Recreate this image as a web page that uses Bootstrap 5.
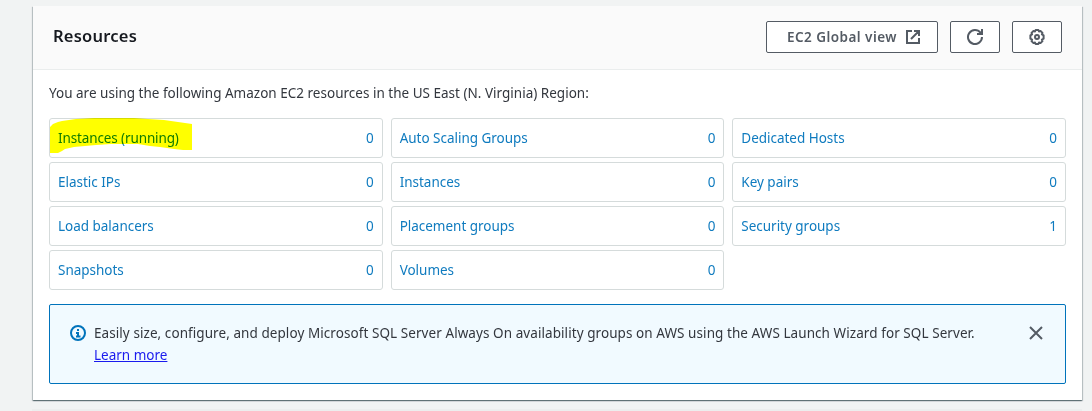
<!DOCTYPE html>
<html lang="en">
<head>
<meta charset="utf-8">
<meta name="viewport" content="width=device-width, initial-scale=1">
<title>EC2 Resources</title>
<link href="https://cdn.jsdelivr.net/npm/bootstrap@5.3.0/dist/css/bootstrap.min.css" rel="stylesheet">
<style>
body{background:#f1f3f3;font-family:"Noto Sans","Open Sans",sans-serif;font-size:13.5px;line-height:22px;color:#16191f;height:411px;overflow:hidden}
.page-pad{padding:6px 10px 0 33px}
.panel{border:0;border-radius:0;background:#fff;height:394px;box-shadow:0 1px 1px 0 rgba(0,28,36,.4),1px 1px 1px 0 rgba(0,28,36,.18),-1px 1px 1px 0 rgba(0,28,36,.18)}
.panel-head{height:64px;background:#fafafa;border-bottom:1px solid #eaeded;padding:0 20px 1px}
.panel-title{font-size:16.5px;font-weight:600;line-height:22px;letter-spacing:.22px;position:relative;top:-1px}
.panel-body{padding:12px 16px 0}
.intro{letter-spacing:.01px;margin-bottom:14px;color:#33373e}
.btn-aws{--bs-btn-color:#545b64;--bs-btn-border-color:#545b64;--bs-btn-bg:#fff;--bs-btn-hover-color:#16191f;--bs-btn-hover-border-color:#16191f;--bs-btn-border-radius:2px;--bs-btn-padding-x:0;--bs-btn-padding-y:0;--bs-btn-font-size:13.5px;--bs-btn-font-weight:600;height:32px;width:50px}
.btn-wide{width:172px;letter-spacing:.47px;padding-left:4px}
.actions{gap:12px}
.tiles{display:grid;grid-template-columns:repeat(3,1fr);gap:4px 8px}
.tile{position:relative;height:40px;border:1px solid #d5dbdb;border-radius:3px;padding:0 8px;color:#0f7bbf;text-decoration:none;letter-spacing:-.02px}
.tile-marked{letter-spacing:-.12px}
.marker{position:absolute;left:0;top:-1px;mix-blend-mode:multiply;pointer-events:none}
.notice{height:80px;margin:14px 0 0;border:1px solid #0073bb;border-radius:2px;background:#f1faff;padding:17px 21px 0 20px;color:#33373e}
.notice-text{letter-spacing:.07px;margin-left:8px}
.notice a{color:#1a1aee;letter-spacing:0}
.info-icon,.close-icon{margin-top:3px}
.next-panel{height:2px;margin:9px 10px 0 32px;background:#eceeee}
</style>
</head>
<body>
<main class="page-pad">
<section class="card panel">
<header class="panel-head d-flex align-items-center justify-content-between">
<h2 class="panel-title m-0">Resources</h2>
<div class="actions d-flex">
<button class="btn btn-aws btn-wide d-flex align-items-center justify-content-center" type="button"><span>EC2 Global view</span>
<svg class="ms-2" width="16" height="16" viewBox="0 0 16 16" fill="none" stroke="currentColor" stroke-width="2"><path d="M7 2H2v12h12V9M9 2h5v5M14 2 6 10"/></svg></button>
<button class="btn btn-aws d-flex align-items-center justify-content-center" type="button" aria-label="Refresh">
<svg width="16" height="16" viewBox="0 0 16 16" fill="none" stroke="currentColor" stroke-width="2"><path d="M10 5h5V0M15 8a7 7 0 1 1-1.500-4.300L14.700 5"/></svg></button>
<button class="btn btn-aws d-flex align-items-center justify-content-center" type="button" aria-label="Settings">
<svg width="16" height="16" viewBox="0 0 16 16" fill="none" stroke="currentColor" stroke-width="2" stroke-linejoin="round"><path d="M6.600 1h2.800l.6 1.500 1.500-.6 2 2-.6 1.500 1.700.9v3.400l-1.700.9.6 1.500-2 2-1.500-.6-.6 1.500H6.600L6 13.500l-1.500.6-2-2 .6-1.500L1.400 9.700V6.300l1.700-.9-.6-1.500 2-2 1.500.6z"/><circle cx="8" cy="8" r="2"/></svg></button>
</div>
</header>
<div class="panel-body">
<p class="intro">You are using the following Amazon EC2 resources in the US East (N. Virginia) Region:</p>
<div class="tiles">
<a href="#" class="tile tile-marked d-flex align-items-center justify-content-between"><span>Instances (running)</span><span>0</span>
<svg class="marker" width="144" height="38" viewBox="0 0 144 38"><path fill="#ff0" d="M0 9 3 6 8 4 12 3 26 1 44 0H84L98 1 114 2 128 4 142 6V32H133L124 31 110 29 100 28 88 26H61L46 27 24 29 15 31 12 33 8 35H0z"/></svg></a>
<a href="#" class="tile d-flex align-items-center justify-content-between"><span>Auto Scaling Groups</span><span>0</span></a>
<a href="#" class="tile d-flex align-items-center justify-content-between"><span>Dedicated Hosts</span><span>0</span></a>
<a href="#" class="tile d-flex align-items-center justify-content-between"><span>Elastic IPs</span><span>0</span></a>
<a href="#" class="tile d-flex align-items-center justify-content-between"><span>Instances</span><span>0</span></a>
<a href="#" class="tile d-flex align-items-center justify-content-between"><span>Key pairs</span><span>0</span></a>
<a href="#" class="tile d-flex align-items-center justify-content-between"><span>Load balancers</span><span>0</span></a>
<a href="#" class="tile d-flex align-items-center justify-content-between"><span>Placement groups</span><span>0</span></a>
<a href="#" class="tile d-flex align-items-center justify-content-between"><span>Security groups</span><span>1</span></a>
<a href="#" class="tile d-flex align-items-center justify-content-between"><span>Snapshots</span><span>0</span></a>
<a href="#" class="tile d-flex align-items-center justify-content-between"><span>Volumes</span><span>0</span></a>
</div>
<div class="notice d-flex align-items-start" role="status">
<svg class="info-icon flex-shrink-0" width="16" height="16" viewBox="0 0 16 16" fill="none" stroke="#0073bb" stroke-width="2"><circle cx="8" cy="8" r="7"/><path d="M8 4v2M6 8h2v3M6 11.500h4.500"/></svg>
<div class="notice-text flex-grow-1">Easily size, configure, and deploy Microsoft SQL Server Always On availability groups on AWS using the AWS Launch Wizard for SQL Server.<br><a href="#">Learn more</a></div>
<svg class="close-icon flex-shrink-0" width="16" height="16" viewBox="0 0 16 16" fill="none" stroke="#545b64" stroke-width="2"><path d="m2 2 12 12M14 2 2 14"/></svg>
</div>
</div>
</section>
</main>
<div class="next-panel"></div>
</body>
</html>
